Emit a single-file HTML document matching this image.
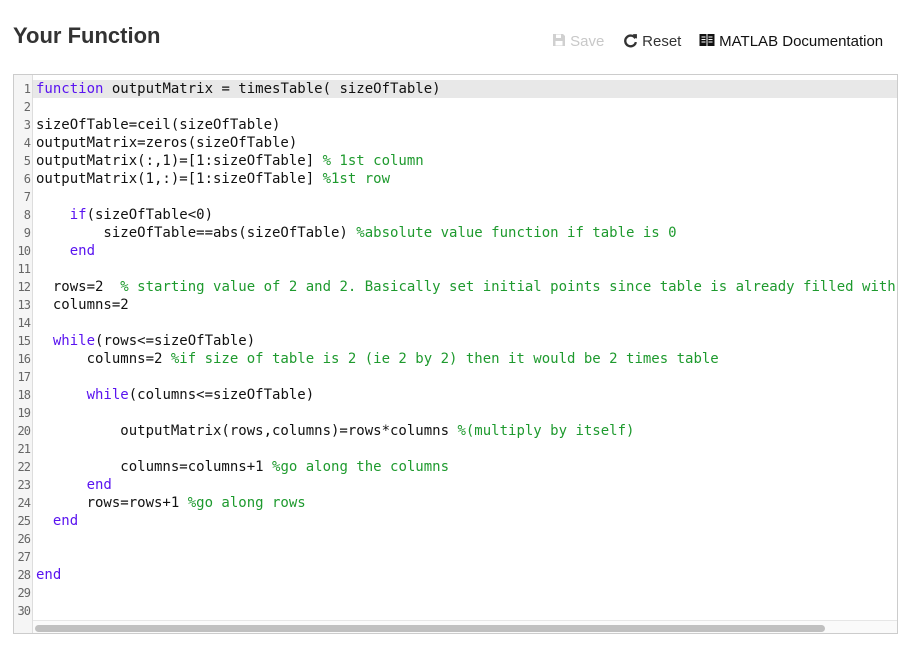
<!DOCTYPE html>
<html><head><style>
body{margin:0;background:#fff;width:913px;height:654px;overflow:hidden;font-family:"Liberation Sans",sans-serif;}
h1{position:absolute;left:13px;top:23px;margin:0;font-size:22px;font-weight:bold;color:#333;}
.tb{position:absolute;top:33px;font-size:15px;color:#222;white-space:nowrap;}
.ed{position:absolute;left:13px;top:74px;width:883px;height:558px;border:1px solid #ccc;overflow:hidden;}
.gut{position:absolute;left:0;top:0;width:18px;height:558px;background:#f5f5f5;border-right:1px solid #ddd;}
.ln{position:absolute;left:0;width:16px;text-align:right;font-family:"DejaVu Sans Mono",monospace;font-size:12px;color:#666;line-height:18px;letter-spacing:-1px;}
.code{position:absolute;left:22px;top:5px;font-family:"DejaVu Sans Mono",monospace;font-size:14px;line-height:18px;color:#111;white-space:pre;}
.hl{position:absolute;left:19px;top:5px;width:864px;height:18px;background:#e8e8e8;}
.k{color:#5a14f0}.c{color:#1e9a2e}
.sb{position:absolute;left:19px;top:545px;width:864px;height:13px;background:#fafafa;border-top:1px solid #e6e6e6;}
.th{position:absolute;left:2px;top:4px;width:790px;height:7px;background:#c0c0c0;border-radius:4px;}
</style></head><body>
<h1>Your Function</h1>
<div class="tb" style="left:552px;color:#c8c8c8"><svg width="14" height="14" viewBox="0 0 14 14" style="vertical-align:-1px"><path d="M1 1h10l2 2v10H1z" fill="#d0d0d0"/><rect x="4" y="1.5" width="5" height="3.5" fill="#fff"/><rect x="3.5" y="8" width="7" height="4.5" fill="#fff"/></svg> Save</div>
<div class="tb" style="left:623px;color:#333"><svg width="15" height="15" viewBox="0 0 14 14" style="vertical-align:-2px"><path d="M11.5 5A5 5 0 1 0 12 8.5" fill="none" stroke="#333" stroke-width="2.2"/><path d="M9 1l4 0 0 4.5z" fill="#333"/></svg> Reset</div>
<div class="tb" style="left:699px;color:#111"><svg width="16" height="14" viewBox="0 0 16 14" style="vertical-align:-1px"><rect x="0.5" y="1" width="15" height="12" fill="#111"/><path d="M8 1v12" stroke="#fff" stroke-width="1"/><path d="M2.5 4h4M2.5 6.5h4M2.5 9h4M9.5 4h4M9.5 6.5h4M9.5 9h4" stroke="#fff" stroke-width="1"/></svg> MATLAB Documentation</div>
<div class="ed">
<div class="gut"></div>
<div class="hl"></div>
<div class="ln" style="top:5px">1<br>2<br>3<br>4<br>5<br>6<br>7<br>8<br>9<br>10<br>11<br>12<br>13<br>14<br>15<br>16<br>17<br>18<br>19<br>20<br>21<br>22<br>23<br>24<br>25<br>26<br>27<br>28<br>29<br>30</div>
<div class="code"><span class="k">function</span> outputMatrix = timesTable( sizeOfTable)

sizeOfTable=ceil(sizeOfTable)
outputMatrix=zeros(sizeOfTable)
outputMatrix(:,1)=[1:sizeOfTable] <span class="c">% 1st column</span>
outputMatrix(1,:)=[1:sizeOfTable] <span class="c">%1st row</span>

    <span class="k">if</span>(sizeOfTable&lt;0)
        sizeOfTable==abs(sizeOfTable) <span class="c">%absolute value function if table is 0</span>
    <span class="k">end</span>

  rows=2  <span class="c">% starting value of 2 and 2. Basically set initial points since table is already filled with</span>
  columns=2

  <span class="k">while</span>(rows&lt;=sizeOfTable)
      columns=2 <span class="c">%if size of table is 2 (ie 2 by 2) then it would be 2 times table</span>

      <span class="k">while</span>(columns&lt;=sizeOfTable)

          outputMatrix(rows,columns)=rows*columns <span class="c">%(multiply by itself)</span>

          columns=columns+1 <span class="c">%go along the columns</span>
      <span class="k">end</span>
      rows=rows+1 <span class="c">%go along rows</span>
  <span class="k">end</span>


<span class="k">end</span>
</div>
<div class="sb"><div class="th"></div></div>
</div>
</body></html>
